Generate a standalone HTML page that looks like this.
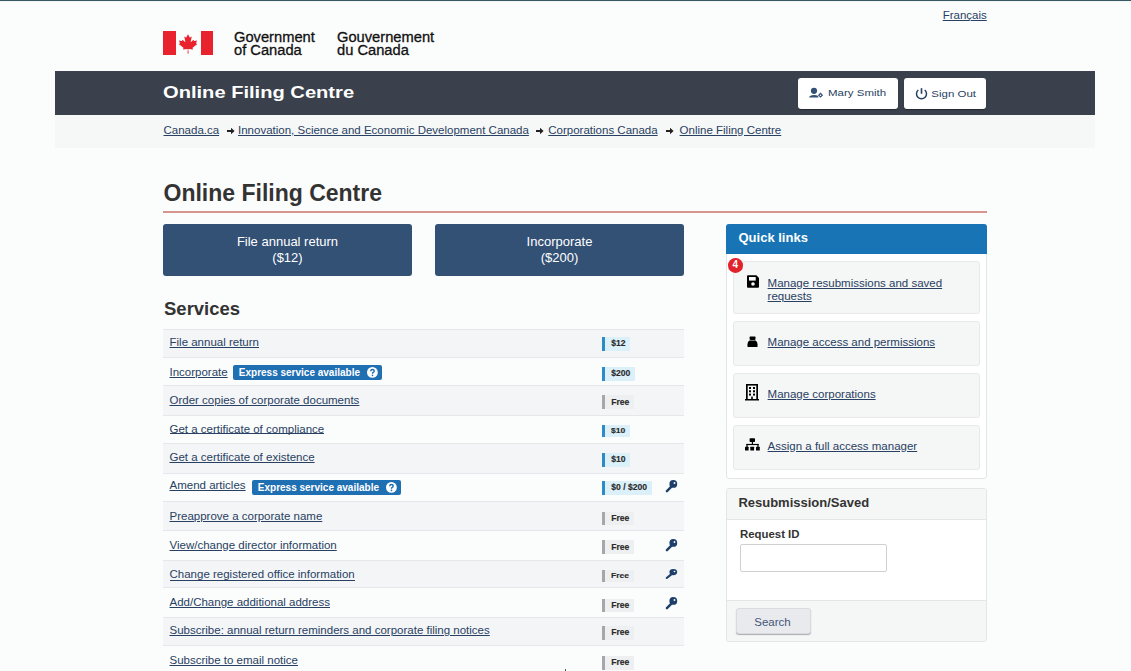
<!DOCTYPE html>
<html lang="en"><head><meta charset="utf-8"><title>Online Filing Centre</title>
<style>
*{margin:0;padding:0;box-sizing:border-box}
html,body{width:1131px;height:671px;overflow:hidden;background:#fbfcfc;font-family:"Liberation Sans",sans-serif}
.t{position:absolute;white-space:nowrap}
.r{position:absolute}
.u{text-decoration:underline;text-underline-offset:1px;text-decoration-thickness:1px}
svg{position:absolute;overflow:visible}
</style></head><body>
<div class="r" style="left:0px;top:0px;width:1131px;height:1px;background:#385862"></div>
<div class="r" style="left:0px;top:1px;width:1131px;height:1px;background:#f3f5f5"></div>
<div class="t u" style="left:942.7px;top:7.62px;font-size:11.5px;line-height:14px;font-weight:400;color:#284162;">Français</div>
<svg style="left:163px;top:31.4px" width="50" height="24" viewBox="0 0 50 24">
<rect x="0" y="0" width="13" height="24" fill="#e8232d"/>
<rect x="38" y="0" width="12" height="24" fill="#e8232d"/>
<svg x="15.9" y="3.2" width="18.6" height="19.3" viewBox="-1860 -2000 3720 4030" preserveAspectRatio="none"><path fill="#e8232d" d="m-130 2030 45-863a95 95 0 0 0-111-98l-859 151 116-320a65 65 0 0 0-20-73l-941-762 212-99a65 65 0 0 0 34-79l-186-572 542 115a65 65 0 0 0 73-38l105-247 423 454a65 65 0 0 0 111-57l-204-1052 327 189a65 65 0 0 0 91-27l332-652 332 652a65 65 0 0 0 91 27l327-189-204 1052a65 65 0 0 0 111 57l423-454 105 247a65 65 0 0 0 73 38l542-115-186 572a65 65 0 0 0 34 79l212 99-941 762a65 65 0 0 0-20 73l116 320-859-151a95 95 0 0 0-111 98l85 863z"/></svg>
</svg>
<div class="t " style="left:234px;top:28.21px;font-size:14.7px;line-height:18px;font-weight:400;color:#111;-webkit-text-stroke:0.3px #111">Government</div>
<div class="t " style="left:234px;top:41.11px;font-size:14.7px;line-height:18px;font-weight:400;color:#111;-webkit-text-stroke:0.3px #111">of Canada</div>
<div class="t " style="left:337px;top:28.21px;font-size:14.7px;line-height:18px;font-weight:400;color:#111;-webkit-text-stroke:0.3px #111">Gouvernement</div>
<div class="t " style="left:337px;top:41.11px;font-size:14.7px;line-height:18px;font-weight:400;color:#111;-webkit-text-stroke:0.3px #111">du Canada</div>
<div class="r" style="left:55px;top:71px;width:1040px;height:44.4px;background:#3a414c"></div>
<div class="t " style="left:163.4px;top:82.01px;font-size:17px;line-height:21px;font-weight:700;color:#fff;transform:scaleX(1.183);transform-origin:0 0">Online Filing Centre</div>
<div class="r" style="left:798px;top:78px;width:100px;height:31px;background:#fff;border-radius:3px;box-shadow:0 1px 1px rgba(0,0,0,.35)"></div>
<div class="r" style="left:904px;top:78px;width:82px;height:31px;background:#fff;border-radius:3px;box-shadow:0 1px 1px rgba(0,0,0,.35)"></div>
<svg style="left:808px;top:87px" width="16" height="12" viewBox="0 0 16 12">
<circle cx="6" cy="3.8" r="3.1" fill="#335075"/>
<path d="M1 10.6 Q1.5 8 6 8 Q9 8 10 9 L10.5 10.6 Z" fill="#335075"/>
<path d="M12.5 5.6 L15.1 8.2 L12.5 10.8 L9.9 8.2 Z" fill="#335075"/><circle cx="12.5" cy="8.2" r="0.8" fill="#fff"/>
</svg>
<div class="t " style="left:828px;top:85.32px;font-size:11.5px;line-height:14px;font-weight:400;color:#284162;transform:scaleY(0.74);transform-origin:0 9.2px">Mary Smith</div>
<svg style="left:914px;top:87px" width="15" height="13" viewBox="0 0 15 13">
<path d="M4.3 3 A5 5 0 1 0 10.7 3" fill="none" stroke="#284162" stroke-width="1.5"/>
<line x1="7.5" y1="1.2" x2="7.5" y2="6.8" stroke="#284162" stroke-width="1.6"/>
</svg>
<div class="t " style="left:931.3px;top:85.62px;font-size:11.5px;line-height:14px;font-weight:400;color:#284162;transform:scaleY(0.74);transform-origin:0 9.2px">Sign Out</div>
<div class="r" style="left:55px;top:115.4px;width:1040px;height:32.6px;background:#f6f7f7"></div>
<div class="t u" style="left:163.5px;top:122.62px;font-size:11.5px;line-height:14px;font-weight:400;color:#284162;">Canada.ca</div>
<div class="t u" style="left:238px;top:122.62px;font-size:11.5px;line-height:14px;font-weight:400;color:#284162;">Innovation, Science and Economic Development Canada</div>
<div class="t u" style="left:548.3px;top:122.62px;font-size:11.5px;line-height:14px;font-weight:400;color:#284162;">Corporations Canada</div>
<div class="t u" style="left:679.6px;top:122.62px;font-size:11.5px;line-height:14px;font-weight:400;color:#284162;">Online Filing Centre</div>
<svg style="left:227.2px;top:127px" width="8" height="8" viewBox="0 0 8 8"><path d="M0 3 H4 V0.8 L7.6 4 L4 7.2 V5 H0 Z" fill="#222"/></svg>
<svg style="left:535.8px;top:127px" width="8" height="8" viewBox="0 0 8 8"><path d="M0 3 H4 V0.8 L7.6 4 L4 7.2 V5 H0 Z" fill="#222"/></svg>
<svg style="left:665.8px;top:127px" width="8" height="8" viewBox="0 0 8 8"><path d="M0 3 H4 V0.8 L7.6 4 L4 7.2 V5 H0 Z" fill="#222"/></svg>
<div class="t " style="left:163.5px;top:178.93px;font-size:23px;line-height:29px;font-weight:700;color:#333;">Online Filing Centre</div>
<div class="r" style="left:163px;top:211px;width:824px;height:2px;background:#d6968f"></div>
<div class="r" style="left:163px;top:224px;width:249px;height:52px;background:#335075;border-radius:3px"></div>
<div class="t" style="left:163px;width:249px;text-align:center;top:234.30px;font-size:13px;line-height:15.6px;color:#fff">File annual return<br>($12)</div>
<div class="r" style="left:435px;top:224px;width:249px;height:52px;background:#335075;border-radius:3px"></div>
<div class="t" style="left:435px;width:249px;text-align:center;top:234.30px;font-size:13px;line-height:15.6px;color:#fff">Incorporate<br>($200)</div>
<div class="t " style="left:164px;top:296.99px;font-size:18.5px;line-height:23px;font-weight:700;color:#333;">Services</div>
<div class="r" style="left:163px;top:329px;width:521px;height:28px;background:#f4f5f7;border-top:1px solid #e5e7ea"></div>
<div class="t u" style="left:169.5px;top:334.92px;font-size:11.5px;line-height:14px;font-weight:400;color:#284162;">File annual return</div>
<div class="r" style="left:602px;top:337.3px;width:28.3px;height:13.5px;background:#dcf0fa;border-left:3px solid #2d8cc6"></div>
<div class="t " style="left:611.2px;top:338.42px;font-size:8.6px;line-height:11px;font-weight:700;color:#2b2b2b;-webkit-text-stroke:0.15px #2b2b2b">$12</div>
<div class="r" style="left:163px;top:357px;width:521px;height:28px;background:#fbfcfc;border-top:1px solid #e5e7ea"></div>
<div class="t u" style="left:169.5px;top:364.62px;font-size:11.5px;line-height:14px;font-weight:400;color:#284162;">Incorporate</div>
<div class="r" style="left:233.0px;top:365.3px;width:149.3px;height:14.9px;background:#1f6fb3;border-radius:2px"></div>
<div class="t " style="left:238.8px;top:367.44px;font-size:10px;line-height:12px;font-weight:700;color:#fff;">Express service available</div>
<svg style="left:367.1px;top:367.2px" width="10.8" height="10.8" viewBox="0 0 20 20"><circle cx="10" cy="10" r="10" fill="#fff"/><path d="M6.9 7.7 Q6.9 4.5 10.1 4.5 Q13.3 4.5 13.3 7.3 Q13.3 9.1 11.4 10 Q10.2 10.6 10.2 12.3" fill="none" stroke="#1f6fb3" stroke-width="2.7"/><circle cx="10.2" cy="15.4" r="1.55" fill="#1f6fb3"/></svg>
<div class="r" style="left:602px;top:367.2px;width:33.2px;height:13.5px;background:#dcf0fa;border-left:3px solid #2d8cc6"></div>
<div class="t " style="left:611.2px;top:368.32px;font-size:8.6px;line-height:11px;font-weight:700;color:#2b2b2b;-webkit-text-stroke:0.15px #2b2b2b">$200</div>
<div class="r" style="left:163px;top:385px;width:521px;height:30px;background:#f4f5f7;border-top:1px solid #e5e7ea"></div>
<div class="t u" style="left:169.5px;top:392.92px;font-size:11.5px;line-height:14px;font-weight:400;color:#284162;">Order copies of corporate documents</div>
<div class="r" style="left:602px;top:395.4px;width:32.0px;height:13.5px;background:#eeeff1;border-left:3px solid #a6a7ab"></div>
<div class="t " style="left:611.2px;top:396.52px;font-size:8.6px;line-height:11px;font-weight:700;color:#2b2b2b;-webkit-text-stroke:0.15px #2b2b2b">Free</div>
<div class="r" style="left:163px;top:415px;width:521px;height:28px;background:#fbfcfc;border-top:1px solid #e5e7ea"></div>
<div class="t " style="left:169.5px;top:422.82px;font-size:11.5px;line-height:14px;font-weight:400;color:#284162;transform:scaleY(0.87);transform-origin:0 3.08px">Get a certificate of compliance</div>
<div class="r" style="left:169.5px;top:433.4px;width:154.7px;height:1px;background:#284162"></div>
<div class="r" style="left:602px;top:425.1px;width:28.3px;height:11.5px;background:#dcf0fa;border-left:3px solid #2d8cc6"></div>
<div class="t " style="left:611.0px;top:425.62px;font-size:8.6px;line-height:11px;font-weight:700;color:#2b2b2b;transform:scaleY(0.78);transform-origin:0 50%;-webkit-text-stroke:0.15px #2b2b2b">$10</div>
<div class="r" style="left:163px;top:443px;width:521px;height:30px;background:#f4f5f7;border-top:1px solid #e5e7ea"></div>
<div class="t u" style="left:169.5px;top:450.32px;font-size:11.5px;line-height:14px;font-weight:400;color:#284162;">Get a certificate of existence</div>
<div class="r" style="left:602px;top:453px;width:28.3px;height:13.5px;background:#dcf0fa;border-left:3px solid #2d8cc6"></div>
<div class="t " style="left:611.2px;top:454.12px;font-size:8.6px;line-height:11px;font-weight:700;color:#2b2b2b;-webkit-text-stroke:0.15px #2b2b2b">$10</div>
<div class="r" style="left:163px;top:473px;width:521px;height:28px;background:#fbfcfc;border-top:1px solid #e5e7ea"></div>
<div class="t u" style="left:169.5px;top:478.32px;font-size:11.5px;line-height:14px;font-weight:400;color:#284162;">Amend articles</div>
<div class="r" style="left:252.0px;top:480.3px;width:149.3px;height:14.9px;background:#1f6fb3;border-radius:2px"></div>
<div class="t " style="left:257.8px;top:482.44px;font-size:10px;line-height:12px;font-weight:700;color:#fff;">Express service available</div>
<svg style="left:386.1px;top:482.2px" width="10.8" height="10.8" viewBox="0 0 20 20"><circle cx="10" cy="10" r="10" fill="#fff"/><path d="M6.9 7.7 Q6.9 4.5 10.1 4.5 Q13.3 4.5 13.3 7.3 Q13.3 9.1 11.4 10 Q10.2 10.6 10.2 12.3" fill="none" stroke="#1f6fb3" stroke-width="2.7"/><circle cx="10.2" cy="15.4" r="1.55" fill="#1f6fb3"/></svg>
<div class="r" style="left:602px;top:481.2px;width:49.5px;height:13.5px;background:#dcf0fa;border-left:3px solid #2d8cc6"></div>
<div class="t " style="left:611.2px;top:482.32px;font-size:8.6px;line-height:11px;font-weight:700;color:#2b2b2b;-webkit-text-stroke:0.15px #2b2b2b">$0 / $200</div>
<svg style="left:665px;top:480.1px" width="13" height="13" viewBox="0 0 13 13" preserveAspectRatio="none"><circle cx="8.3" cy="3.9" r="3.9" fill="#1e3f6a"/><circle cx="9.5" cy="3.0" r="0.95" fill="#fbfcfc"/><line x1="6.4" y1="6.6" x2="1.9" y2="11.2" stroke="#1e3f6a" stroke-width="2.4" stroke-linecap="round"/></svg>
<div class="r" style="left:163px;top:501px;width:521px;height:29px;background:#f4f5f7;border-top:1px solid #e5e7ea"></div>
<div class="t u" style="left:169.5px;top:508.92px;font-size:11.5px;line-height:14px;font-weight:400;color:#284162;">Preapprove a corporate name</div>
<div class="r" style="left:602px;top:511.5px;width:32.0px;height:13.5px;background:#eeeff1;border-left:3px solid #a6a7ab"></div>
<div class="t " style="left:611.2px;top:512.62px;font-size:8.6px;line-height:11px;font-weight:700;color:#2b2b2b;-webkit-text-stroke:0.15px #2b2b2b">Free</div>
<div class="r" style="left:163px;top:530px;width:521px;height:30px;background:#fbfcfc;border-top:1px solid #e5e7ea"></div>
<div class="t u" style="left:169.5px;top:537.72px;font-size:11.5px;line-height:14px;font-weight:400;color:#284162;">View/change director information</div>
<div class="r" style="left:602px;top:540.4px;width:32.0px;height:13.5px;background:#eeeff1;border-left:3px solid #a6a7ab"></div>
<div class="t " style="left:611.2px;top:541.52px;font-size:8.6px;line-height:11px;font-weight:700;color:#2b2b2b;-webkit-text-stroke:0.15px #2b2b2b">Free</div>
<svg style="left:665px;top:539.3px" width="13" height="13" viewBox="0 0 13 13" preserveAspectRatio="none"><circle cx="8.3" cy="3.9" r="3.9" fill="#1e3f6a"/><circle cx="9.5" cy="3.0" r="0.95" fill="#fbfcfc"/><line x1="6.4" y1="6.6" x2="1.9" y2="11.2" stroke="#1e3f6a" stroke-width="2.4" stroke-linecap="round"/></svg>
<div class="r" style="left:163px;top:560px;width:521px;height:27px;background:#f4f5f7;border-top:1px solid #e5e7ea"></div>
<div class="t " style="left:169.5px;top:568.32px;font-size:11.5px;line-height:14px;font-weight:400;color:#284162;transform:scaleY(0.87);transform-origin:0 3.08px">Change registered office information</div>
<div class="r" style="left:169.5px;top:579.5px;width:185.2px;height:1px;background:#284162"></div>
<div class="r" style="left:602px;top:570.4px;width:32.0px;height:11.5px;background:#eeeff1;border-left:3px solid #a6a7ab"></div>
<div class="t " style="left:611.0px;top:570.92px;font-size:8.6px;line-height:11px;font-weight:700;color:#2b2b2b;transform:scaleY(0.78);transform-origin:0 50%;-webkit-text-stroke:0.15px #2b2b2b">Free</div>
<svg style="left:665px;top:569px" width="13" height="10.4" viewBox="0 0 13 13" preserveAspectRatio="none"><circle cx="8.3" cy="3.9" r="3.9" fill="#1e3f6a"/><circle cx="9.5" cy="3.0" r="0.95" fill="#fbfcfc"/><line x1="6.4" y1="6.6" x2="1.9" y2="11.2" stroke="#1e3f6a" stroke-width="2.4" stroke-linecap="round"/></svg>
<div class="r" style="left:163px;top:587px;width:521px;height:30px;background:#fbfcfc;border-top:1px solid #e5e7ea"></div>
<div class="t u" style="left:169.5px;top:595.32px;font-size:11.5px;line-height:14px;font-weight:400;color:#284162;">Add/Change additional address</div>
<div class="r" style="left:602px;top:598.6px;width:32.0px;height:13.5px;background:#eeeff1;border-left:3px solid #a6a7ab"></div>
<div class="t " style="left:611.2px;top:599.72px;font-size:8.6px;line-height:11px;font-weight:700;color:#2b2b2b;-webkit-text-stroke:0.15px #2b2b2b">Free</div>
<svg style="left:665px;top:597.2px" width="13" height="13" viewBox="0 0 13 13" preserveAspectRatio="none"><circle cx="8.3" cy="3.9" r="3.9" fill="#1e3f6a"/><circle cx="9.5" cy="3.0" r="0.95" fill="#fbfcfc"/><line x1="6.4" y1="6.6" x2="1.9" y2="11.2" stroke="#1e3f6a" stroke-width="2.4" stroke-linecap="round"/></svg>
<div class="r" style="left:163px;top:617px;width:521px;height:28px;background:#f4f5f7;border-top:1px solid #e5e7ea"></div>
<div class="t u" style="left:169.5px;top:623.42px;font-size:11.5px;line-height:14px;font-weight:400;color:#284162;">Subscribe: annual return reminders and corporate filing notices</div>
<div class="r" style="left:602px;top:626px;width:32.0px;height:13.5px;background:#eeeff1;border-left:3px solid #a6a7ab"></div>
<div class="t " style="left:611.2px;top:627.12px;font-size:8.6px;line-height:11px;font-weight:700;color:#2b2b2b;-webkit-text-stroke:0.15px #2b2b2b">Free</div>
<div class="r" style="left:163px;top:645px;width:521px;height:29px;background:#fbfcfc;border-top:1px solid #e5e7ea"></div>
<div class="t u" style="left:169.5px;top:653.12px;font-size:11.5px;line-height:14px;font-weight:400;color:#284162;">Subscribe to email notice</div>
<div class="r" style="left:602px;top:656px;width:32.0px;height:13.5px;background:#eeeff1;border-left:3px solid #a6a7ab"></div>
<div class="t " style="left:611.2px;top:657.12px;font-size:8.6px;line-height:11px;font-weight:700;color:#2b2b2b;-webkit-text-stroke:0.15px #2b2b2b">Free</div>
<div class="r" style="left:726px;top:224px;width:261px;height:254.5px;background:#fff;border:1px solid #e3e5e7;border-radius:3px"></div>
<div class="r" style="left:726px;top:224px;width:261px;height:30.4px;background:#1874b5;border-radius:3px 3px 0 0"></div>
<div class="t " style="left:738.5px;top:229.50px;font-size:13px;line-height:16px;font-weight:700;color:#fff;">Quick links</div>
<div class="r" style="left:733px;top:261px;width:247px;height:53px;background:#f5f6f6;border:1px solid #e8e9ea;border-radius:3px"></div>
<div class="t u" style="left:767.6px;top:276.02px;font-size:11.5px;line-height:14px;font-weight:400;color:#284162;">Manage resubmissions and saved</div>
<div class="t u" style="left:767.6px;top:288.92px;font-size:11.5px;line-height:14px;font-weight:400;color:#284162;">requests</div>
<div class="r" style="left:733px;top:321px;width:247px;height:45px;background:#f5f6f6;border:1px solid #e8e9ea;border-radius:3px"></div>
<div class="t u" style="left:767.6px;top:335.02px;font-size:11.5px;line-height:14px;font-weight:400;color:#284162;">Manage access and permissions</div>
<div class="r" style="left:733px;top:373px;width:247px;height:45px;background:#f5f6f6;border:1px solid #e8e9ea;border-radius:3px"></div>
<div class="t u" style="left:767.6px;top:387.02px;font-size:11.5px;line-height:14px;font-weight:400;color:#284162;">Manage corporations</div>
<div class="r" style="left:733px;top:425px;width:247px;height:45px;background:#f5f6f6;border:1px solid #e8e9ea;border-radius:3px"></div>
<div class="t u" style="left:767.6px;top:438.82px;font-size:11.5px;line-height:14px;font-weight:400;color:#284162;">Assign a full access manager</div>
<div class="t" style="left:728px;top:258.2px;width:14.6px;height:14.6px;border-radius:50%;background:#e1242b;color:#fff;font-size:10px;font-weight:700;line-height:14.6px;text-align:center">4</div>
<svg style="left:747px;top:275px" width="12" height="13" viewBox="0 0 12 13"><path d="M1 0.3 H9.4 L12 2.9 V11.7 Q12 12.7 11 12.7 H1 Q0 12.7 0 11.7 V1.3 Q0 0.3 1 0.3 Z" fill="#000"/><rect x="2" y="2" width="6.7" height="3.6" fill="#fafafa"/><circle cx="6" cy="9" r="1.8" fill="#fafafa"/></svg>
<svg style="left:746.5px;top:335.5px" width="11" height="11.5" viewBox="0 0 11 11.5"><path d="M3.2 0.4 H7.9 Q8.5 0.4 8.5 1 V2.9 Q8.5 3.9 7.5 3.9 H3.6 Q2.6 3.9 2.6 2.9 V1 Q2.6 0.4 3.2 0.4 Z" fill="#000"/><path d="M2.4 4.4 H8.6 Q10.5 5.3 10.5 8.3 V10.5 Q10.5 11.1 9.9 11.1 H1.1 Q0.5 11.1 0.5 10.5 V8.3 Q0.5 5.3 2.4 4.4 Z" fill="#000"/></svg>
<svg style="left:745px;top:383.5px" width="14" height="17" viewBox="0 0 14 17"><path d="M1 0 H13 V15 H14 V16.5 H0 V15 H1 Z" fill="#000"/><rect x="2.7" y="1.6" width="8.6" height="13.4" fill="#f5f6f6"/><g fill="#000"><rect x="4" y="3" width="2" height="2"/><rect x="8" y="3" width="2" height="2"/><rect x="4" y="6.3" width="2" height="2"/><rect x="8" y="6.3" width="2" height="2"/><rect x="4" y="9.6" width="2" height="2"/><rect x="8" y="9.6" width="2" height="2"/><rect x="6.2" y="12.6" width="1.6" height="3"/></g></svg>
<svg style="left:745px;top:438px" width="15" height="13" viewBox="0 0 15 13"><g fill="#000"><rect x="4.6" y="0.3" width="5.4" height="3.6" rx="0.6"/><rect x="6.8" y="3.5" width="1.2" height="3"/><rect x="1.4" y="5.9" width="12.2" height="1.2"/><rect x="1.4" y="6" width="1.2" height="3"/><rect x="12.4" y="6" width="1.2" height="3"/><rect x="0" y="8.8" width="3.6" height="3.8" rx="0.5"/><rect x="5.3" y="8.8" width="3.8" height="3.8" rx="0.5"/><rect x="11" y="8.8" width="3.8" height="3.8" rx="0.5"/></g></svg>
<div class="r" style="left:565px;top:669.3px;width:1.4px;height:1.7px;background:#3c5864"></div>
<div class="r" style="left:726px;top:488px;width:261px;height:154px;background:#fff;border:1px solid #e3e5e7;border-radius:3px"></div>
<div class="r" style="left:727px;top:489px;width:259px;height:30.5px;background:#f5f6f6;border-bottom:1px solid #e3e5e7;border-radius:3px 3px 0 0"></div>
<div class="t " style="left:738.4px;top:494.90px;font-size:13px;line-height:16px;font-weight:700;color:#333;">Resubmission/Saved</div>
<div class="t " style="left:740px;top:527.35px;font-size:11.4px;line-height:14px;font-weight:700;color:#333;">Request ID</div>
<div class="r" style="left:740px;top:544.3px;width:147px;height:27.6px;background:#fff;border:1px solid #cfd1d4;border-radius:2px"></div>
<div class="r" style="left:727px;top:600px;width:259px;height:41px;background:#f5f6f6;border-top:1px solid #e3e5e7;border-radius:0 0 3px 3px"></div>
<div class="r" style="left:735.5px;top:608.4px;width:75.5px;height:25.8px;background:#e9eaed;border:1px solid #d9dbde;border-radius:3px;box-shadow:0 1px 1px rgba(0,0,0,.3)"></div>
<div class="t " style="left:754.3px;top:614.52px;font-size:11.5px;line-height:14px;font-weight:400;color:#44557a;">Search</div>
</body></html>
